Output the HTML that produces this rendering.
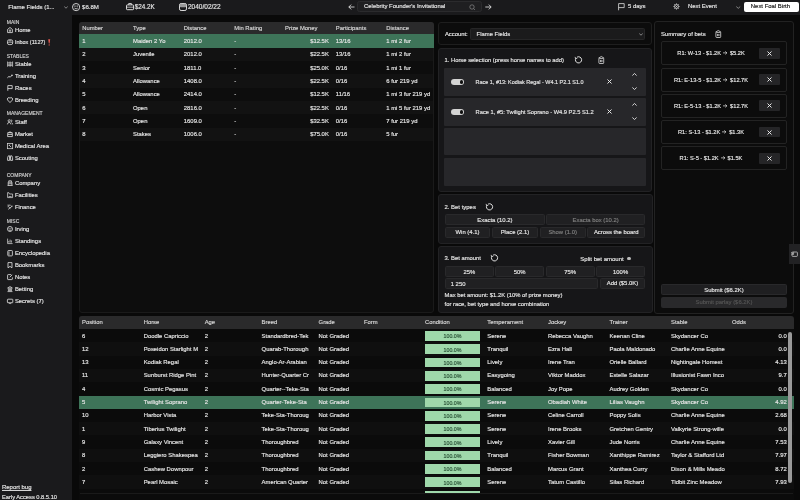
<!DOCTYPE html><html><head><meta charset="utf-8"><style>
*{box-sizing:border-box;margin:0;padding:0}
html,body{width:800px;height:500px;overflow:hidden;background:#090909;font-family:'Liberation Sans', sans-serif;color:#e6e6e6;font-size:5.9px;line-height:1}
.ab{position:absolute}
.t{position:absolute;white-space:nowrap;line-height:1;-webkit-text-stroke-width:0.15px}
.c{transform:translateY(calc(-50% + 0.9px))}
svg{position:absolute;overflow:visible}
</style></head><body><div id="root" style="position:absolute;left:0;top:0;width:800px;height:500px;overflow:hidden;background:#090909;will-change:transform">

<div class="ab" style="left:0px;top:0px;width:800px;height:15px;background:#1a1a1c;"></div>
<div class="ab" style="left:0px;top:15px;width:72px;height:485px;background:#1a1a1c;"></div>
<div class="t c" style="left:8.2px;top:6.0px;font-size:6.0px;">Flame Fields (1...</div>
<svg style="left:64px;top:5.5px" width="4" height="3" viewBox="0 0 4 3"><path d="M0.3 0.6 L2 2.2 L3.7 0.6" fill="none" stroke="#ccc" stroke-width="0.6"/></svg>
<svg style="left:71.9px;top:2.7px" width="8.2" height="8.2" viewBox="0 0 8.2 8.2"><circle cx="4.1" cy="4.1" r="3.6" fill="none" stroke="#e0e0e0" stroke-width="0.9"/><path d="M3 2.4 V3.9 M5.2 2.4 V3.9" stroke="#e0e0e0" stroke-width="0.8"/><path d="M2.5 5.1 Q4.1 6.8 5.7 5.1" fill="none" stroke="#e0e0e0" stroke-width="0.8"/></svg>
<div class="t c" style="left:82px;top:6.0px;font-size:6.1px;">$6.8M</div>
<svg style="left:125.6px;top:2.8px" width="8.1" height="7.2" viewBox="0 0 8.1 7.2"><rect x="0.5" y="1.9" width="7.1" height="4.8" rx="0.8" fill="none" stroke="#e0e0e0" stroke-width="1"/><path d="M2.7 1.9 V0.5 H5.4 V1.9" fill="none" stroke="#e0e0e0" stroke-width="0.9"/><path d="M0.5 4.2 H7.6" stroke="#d0d0d0" stroke-width="0.8"/></svg>
<div class="t c" style="left:134.7px;top:6.0px;font-size:6.3px;">$24.2K</div>
<svg style="left:178.9px;top:2.8px" width="8" height="8" viewBox="0 0 8 8"><rect x="0.5" y="0.5" width="7" height="7" rx="1.6" fill="none" stroke="#dcdcdc" stroke-width="1"/><rect x="0.8" y="0.8" width="6.4" height="3.4" rx="1" fill="#9a9a9a"/></svg>
<div class="t c" style="left:188px;top:6.0px;font-size:6.5px;">2040/02/22</div>
<svg style="left:348px;top:4px" width="7" height="6" viewBox="0 0 7 6"><path d="M6.5 3 H0.8 M3.2 0.6 L0.8 3 L3.2 5.4" fill="none" stroke="#eee" stroke-width="0.8"/></svg>
<div class="ab" style="left:357.3px;top:1px;width:124.69999999999999px;height:11.2px;background:#1f1f21;border:0.6px solid #2b2b2d;border-radius:2.5px;"></div>
<div class="t c" style="left:364px;top:6.3px;font-size:5.94px;">Celebrity Founder's Invitational</div>
<svg style="left:469px;top:4px" width="7" height="7" viewBox="0 0 7 7"><circle cx="3" cy="3" r="2.2" fill="none" stroke="#999" stroke-width="0.6"/><path d="M4.6 4.6 L6 6" stroke="#999" stroke-width="0.6"/></svg>
<svg style="left:485px;top:4px" width="7" height="6" viewBox="0 0 7 6"><path d="M0.3 3 H6 M3.8 0.6 L6.2 3 L3.8 5.4" fill="none" stroke="#eee" stroke-width="0.8"/></svg>
<svg style="left:618.4px;top:2.8px" width="7" height="7.6" viewBox="0 0 7 7.6"><path d="M0.6 7.3 V0.6 H6.2 V4.6 H0.6" fill="none" stroke="#e0e0e0" stroke-width="0.8" stroke-linejoin="round"/></svg>
<div class="t c" style="left:628px;top:6.1px;font-size:5.94px;">5 days</div>
<svg style="left:673px;top:3.4px" width="7" height="7" viewBox="0 0 7 7"><circle cx="3.5" cy="3.5" r="1.9" fill="none" stroke="#ddd" stroke-width="0.9"/><path d="M3.5 0.4 V1.4 M3.5 5.6 V6.6 M0.4 3.5 H1.4 M5.6 3.5 H6.6 M1.3 1.3 L2 2 M5 5 L5.7 5.7 M5.7 1.3 L5 2 M2 5 L1.3 5.7" stroke="#ddd" stroke-width="0.75"/><circle cx="3.5" cy="3.5" r="0.6" fill="#ddd"/></svg>
<div class="t c" style="left:688px;top:6.4px;font-size:5.93px;">Next Event</div>
<svg style="left:736px;top:5.5px" width="4.5" height="3" viewBox="0 0 4.5 3"><path d="M0.3 0.6 L2.25 2.3 L4.2 0.6" fill="none" stroke="#ccc" stroke-width="0.6"/></svg>
<div class="ab" style="left:744px;top:1.5px;width:54.799999999999955px;height:10.1px;background:#ffffff;border-radius:2px;"></div>
<div class="t c" style="left:750.8px;top:5.7px;font-size:5.94px;color:#111;">Next Foal Birth</div>
<div class="t c" style="left:6.75px;top:22px;font-size:5.0px;color:#d0d0d0;">MAIN</div>
<div class="t c" style="left:14.9px;top:30px;font-size:5.9px;">Home</div>
<svg style="left:6.8px;top:26.9px" width="6.2" height="6.2" viewBox="0 0 6.2 6.2"><path d="M0.6 2.4 L3 0.5 L5.4 2.4 V5.6 H0.6 Z" fill="none" stroke="#e6e6e6" stroke-width="0.81" stroke-linejoin="round"/><rect x="2.2" y="3" width="1.6" height="1.2" fill="none" stroke="#e6e6e6" stroke-width="0.54"/></svg>
<div class="t c" style="left:14.9px;top:42px;font-size:5.5px;">Inbox (1127)</div>
<svg style="left:6.8px;top:38.9px" width="6.2" height="6.2" viewBox="0 0 6.2 6.2"><rect x="0.5" y="0.8" width="5.2" height="4.8" rx="1.6" fill="none" stroke="#e6e6e6" stroke-width="0.81"/><path d="M0.5 3.2 H5.7 M2 1.8 H4.2" stroke="#e6e6e6" stroke-width="0.68"/></svg>
<div class="t c" style="left:6.75px;top:55.5px;font-size:5.0px;color:#d0d0d0;">STABLES</div>
<div class="t c" style="left:14.9px;top:63.9px;font-size:5.9px;">Stable</div>
<svg style="left:6.8px;top:60.8px" width="6.2" height="6.2" viewBox="0 0 6.2 6.2"><path d="M0.6 0.5 V5.8 M5.6 0.5 V5.8 M3.1 0.5 V5.8 M0.6 1.8 H5.6 M0.6 3.2 H5.6 M0.6 4.6 H5.6" stroke="#dadada" stroke-width="0.68"/></svg>
<div class="t c" style="left:14.9px;top:75.9px;font-size:5.9px;">Training</div>
<svg style="left:6.8px;top:72.80000000000001px" width="6.2" height="6.2" viewBox="0 0 6.2 6.2"><path d="M0.4 4.8 L2 3.4 L3.2 4.2 L5.4 2" fill="none" stroke="#e6e6e6" stroke-width="0.81"/><circle cx="5" cy="2.2" r="0.7" fill="#e6e6e6"/></svg>
<div class="t c" style="left:14.9px;top:88px;font-size:5.9px;">Races</div>
<svg style="left:6.8px;top:84.9px" width="6.2" height="6.2" viewBox="0 0 6.2 6.2"><path d="M0.8 5.8 V0.6 H5.2 V3.6 H0.8" fill="none" stroke="#e6e6e6" stroke-width="0.81" stroke-linejoin="round"/></svg>
<div class="t c" style="left:14.9px;top:100px;font-size:5.9px;">Breeding</div>
<svg style="left:6.8px;top:96.9px" width="6.2" height="6.2" viewBox="0 0 6.2 6.2"><path d="M3 5.6 L0.7 3.1 A1.3 1.3 0 0 1 3 1.2 A1.3 1.3 0 0 1 5.3 3.1 Z" fill="none" stroke="#e6e6e6" stroke-width="0.81" stroke-linejoin="round"/></svg>
<div class="t c" style="left:6.75px;top:113.25px;font-size:5.0px;color:#d0d0d0;">MANAGEMENT</div>
<div class="t c" style="left:14.9px;top:121.6px;font-size:5.9px;">Staff</div>
<svg style="left:6.8px;top:118.5px" width="6.2" height="6.2" viewBox="0 0 6.2 6.2"><circle cx="2.2" cy="1.8" r="1.1" fill="none" stroke="#e6e6e6" stroke-width="0.74"/><path d="M0.4 5.4 Q0.6 3.4 2.2 3.4 Q3.8 3.4 4 5.4 M3.8 0.8 A1 1 0 0 1 4 2.8 M4.6 3.6 Q5.6 4 5.6 5.4" fill="none" stroke="#e6e6e6" stroke-width="0.74"/></svg>
<div class="t c" style="left:14.9px;top:133.7px;font-size:5.9px;">Market</div>
<svg style="left:6.8px;top:130.6px" width="6.2" height="6.2" viewBox="0 0 6.2 6.2"><path d="M0.8 1.6 H5.2 L5.4 5.6 H0.6 Z M1.8 1.6 Q3 0 4.2 1.6 M0.8 3.4 H5.2" fill="none" stroke="#e6e6e6" stroke-width="0.81" stroke-linejoin="round"/></svg>
<div class="t c" style="left:14.9px;top:145.7px;font-size:5.9px;">Medical Area</div>
<svg style="left:6.8px;top:142.6px" width="6.2" height="6.2" viewBox="0 0 6.2 6.2"><rect x="0.5" y="0.5" width="5.2" height="5.2" fill="none" stroke="#dadada" stroke-width="0.74"/><path d="M2 2 L4.2 4.2 M2.8 1.6 L2 2.4" stroke="#e6e6e6" stroke-width="0.81"/></svg>
<div class="t c" style="left:14.9px;top:158px;font-size:5.9px;">Scouting</div>
<svg style="left:6.8px;top:154.9px" width="6.2" height="6.2" viewBox="0 0 6.2 6.2"><path d="M0.6 5.4 V2.6 L1.4 0.8 H2.6 V5.4 Z M5.6 5.4 V2.6 L4.8 0.8 H3.6 V5.4 Z M2.6 2.6 H3.6" fill="none" stroke="#e6e6e6" stroke-width="0.81" stroke-linejoin="round"/></svg>
<div class="t c" style="left:6.75px;top:174.5px;font-size:5.0px;color:#d0d0d0;">COMPANY</div>
<div class="t c" style="left:14.9px;top:183px;font-size:5.9px;">Company</div>
<svg style="left:6.8px;top:179.9px" width="6.2" height="6.2" viewBox="0 0 6.2 6.2"><path d="M0.6 5.5 H5.6 M1.2 5.5 V2.2 H5 V5.5 M1.8 2.2 V0.8 H4.4 V2.2 M1.2 3.8 H5" fill="none" stroke="#dadada" stroke-width="0.81"/></svg>
<div class="t c" style="left:14.9px;top:195px;font-size:5.9px;">Facilities</div>
<svg style="left:6.8px;top:191.9px" width="6.2" height="6.2" viewBox="0 0 6.2 6.2"><path d="M0.6 0.6 V5.6 H5.6 V2 H2.4 L1.8 0.6 Z M1.6 4.6 H4.6" fill="none" stroke="#dadada" stroke-width="0.74" stroke-linejoin="round"/></svg>
<div class="t c" style="left:14.9px;top:207px;font-size:5.9px;">Finance</div>
<svg style="left:6.8px;top:203.9px" width="6.2" height="6.2" viewBox="0 0 6.2 6.2"><path d="M0.6 2.8 L3.2 0.6 M1.2 5.4 L5.4 2 M1.4 2.6 L3.4 4.6 M3.6 1.2 L5.4 3" fill="none" stroke="#dadada" stroke-width="0.81"/><circle cx="1.1" cy="1.1" r="0.6" fill="#dadada"/></svg>
<div class="t c" style="left:6.75px;top:220.5px;font-size:5.0px;color:#d0d0d0;">MISC</div>
<div class="t c" style="left:14.9px;top:228.9px;font-size:5.9px;">Irving</div>
<svg style="left:6.8px;top:225.8px" width="6.2" height="6.2" viewBox="0 0 6.2 6.2"><circle cx="3" cy="3" r="2.5" fill="none" stroke="#e6e6e6" stroke-width="0.81"/><path d="M2.1 2 V3.3 M3.9 2 V3.3 M2 4.3 H4" stroke="#e6e6e6" stroke-width="0.68"/></svg>
<div class="t c" style="left:14.9px;top:240.9px;font-size:5.9px;">Standings</div>
<svg style="left:6.8px;top:237.8px" width="6.2" height="6.2" viewBox="0 0 6.2 6.2"><path d="M0.6 0.6 V5.6 H5.6 M1.8 4.6 V3 M3.1 4.6 V1.6 M4.4 4.6 V2.4" fill="none" stroke="#dadada" stroke-width="0.74"/></svg>
<div class="t c" style="left:14.9px;top:253px;font-size:5.9px;">Encyclopedia</div>
<svg style="left:6.8px;top:249.9px" width="6.2" height="6.2" viewBox="0 0 6.2 6.2"><rect x="0.8" y="0.5" width="4.6" height="5.4" rx="0.8" fill="none" stroke="#e6e6e6" stroke-width="0.81"/><path d="M2 1.4 V5" stroke="#e6e6e6" stroke-width="0.68"/></svg>
<div class="t c" style="left:14.9px;top:265px;font-size:5.9px;">Bookmarks</div>
<svg style="left:6.8px;top:261.9px" width="6.2" height="6.2" viewBox="0 0 6.2 6.2"><path d="M1 5.8 V0.6 H5 V5.8 L3 4.4 Z" fill="none" stroke="#e6e6e6" stroke-width="0.81" stroke-linejoin="round"/></svg>
<div class="t c" style="left:14.9px;top:277px;font-size:5.9px;">Notes</div>
<svg style="left:6.8px;top:273.9px" width="6.2" height="6.2" viewBox="0 0 6.2 6.2"><path d="M4.2 0.6 H1.2 Q0.6 0.6 0.6 1.2 V5 Q0.6 5.6 1.2 5.6 H4.8 Q5.4 5.6 5.4 5 V3.4 M2.8 3.2 L5.2 0.8" fill="none" stroke="#e6e6e6" stroke-width="0.81"/></svg>
<div class="t c" style="left:14.9px;top:289.2px;font-size:5.9px;">Betting</div>
<svg style="left:6.8px;top:286.09999999999997px" width="6.2" height="6.2" viewBox="0 0 6.2 6.2"><path d="M0.5 5.6 H5.5 M1 4.8 H5 M1.4 2.4 V4.6 M2.4 2.4 V4.6 M3.6 2.4 V4.6 M4.6 2.4 V4.6 M0.6 2 L3 0.5 L5.4 2 Z" fill="none" stroke="#dadada" stroke-width="0.74"/></svg>
<div class="t c" style="left:14.9px;top:301.2px;font-size:5.9px;">Secrets (7)</div>
<svg style="left:6.8px;top:298.09999999999997px" width="6.2" height="6.2" viewBox="0 0 6.2 6.2"><rect x="0.4" y="1.2" width="5.4" height="3.6" rx="0.6" fill="none" stroke="#e6e6e6" stroke-width="0.81"/><path d="M1.8 4.8 L3.1 5.8 L4.4 4.8" fill="none" stroke="#e6e6e6" stroke-width="0.68"/></svg>
<svg style="left:48.4px;top:39px" width="2.4" height="7" viewBox="0 0 2.4 7"><path d="M0.2 0.3 H2.2 L1.6 4.6 H0.8 Z" fill="#e0584f"/><circle cx="1.2" cy="5.9" r="0.65" fill="#e0584f"/></svg>
<div class="t c" style="left:2px;top:487.2px;font-size:5.96px;"><span style="text-decoration:underline">Report bug</span></div>
<div class="t c" style="left:2px;top:496.5px;font-size:5.72px;">Early Access 0.8.5.10</div>
<div class="ab" style="left:79px;top:21.6px;width:354.5px;height:291.4px;background:#0d0d0d;border:0.6px solid #1a1a1a;border-radius:3px;"></div>
<div class="ab" style="left:79px;top:21.6px;width:354.5px;height:12.799999999999997px;background:#2a2a2b;border-radius:3px 3px 0 0;"></div>
<div class="t c" style="left:82.2px;top:28.2px;font-size:5.85px;color:#d8d8d8;">Number</div>
<div class="t c" style="left:133px;top:28.2px;font-size:5.85px;color:#d8d8d8;">Type</div>
<div class="t c" style="left:183.8px;top:28.2px;font-size:5.85px;color:#d8d8d8;">Distance</div>
<div class="t c" style="left:234.3px;top:28.2px;font-size:5.85px;color:#d8d8d8;">Min Rating</div>
<div class="t c" style="left:285px;top:28.2px;font-size:5.85px;color:#d8d8d8;">Prize Money</div>
<div class="t c" style="left:335.8px;top:28.2px;font-size:5.85px;color:#d8d8d8;">Participants</div>
<div class="t c" style="left:386.3px;top:28.2px;font-size:5.85px;color:#d8d8d8;">Distance</div>
<div class="ab" style="left:79px;top:34.4px;width:354.5px;height:13.300000000000004px;background:#3e7459;"></div>
<div class="t c" style="left:82.2px;top:41.05px;font-size:5.9px;">1</div>
<div class="t c" style="left:133px;top:41.05px;font-size:5.9px;">Maiden 2 Yo</div>
<div class="t c" style="left:183.8px;top:41.05px;font-size:5.9px;">2012.0</div>
<div class="t c" style="left:234.3px;top:41.05px;font-size:5.9px;">-</div>
<div class="t c" style="right:471.2px;top:41.05px;font-size:5.9px">$12.5K</div>
<div class="t c" style="left:335.8px;top:41.05px;font-size:5.9px;">13/16</div>
<div class="t c" style="left:386.3px;top:41.05px;font-size:5.9px;">1 mi 2 fur</div>
<div class="ab" style="left:80px;top:47.7px;width:352.5px;height:13.299999999999997px;background:#121212;"></div>
<div class="t c" style="left:82.2px;top:54.35px;font-size:5.9px;">2</div>
<div class="t c" style="left:133px;top:54.35px;font-size:5.9px;">Juvenile</div>
<div class="t c" style="left:183.8px;top:54.35px;font-size:5.9px;">2012.0</div>
<div class="t c" style="left:234.3px;top:54.35px;font-size:5.9px;">-</div>
<div class="t c" style="right:471.2px;top:54.35px;font-size:5.9px">$22.5K</div>
<div class="t c" style="left:335.8px;top:54.35px;font-size:5.9px;">13/16</div>
<div class="t c" style="left:386.3px;top:54.35px;font-size:5.9px;">1 mi 2 fur</div>
<div class="t c" style="left:82.2px;top:67.65px;font-size:5.9px;">3</div>
<div class="t c" style="left:133px;top:67.65px;font-size:5.9px;">Senior</div>
<div class="t c" style="left:183.8px;top:67.65px;font-size:5.9px;">1811.0</div>
<div class="t c" style="left:234.3px;top:67.65px;font-size:5.9px;">-</div>
<div class="t c" style="right:471.2px;top:67.65px;font-size:5.9px">$25.0K</div>
<div class="t c" style="left:335.8px;top:67.65px;font-size:5.9px;">0/16</div>
<div class="t c" style="left:386.3px;top:67.65px;font-size:5.9px;">1 mi 1 fur</div>
<div class="ab" style="left:80px;top:74.30000000000001px;width:352.5px;height:13.299999999999997px;background:#121212;"></div>
<div class="t c" style="left:82.2px;top:80.95000000000002px;font-size:5.9px;">4</div>
<div class="t c" style="left:133px;top:80.95000000000002px;font-size:5.9px;">Allowance</div>
<div class="t c" style="left:183.8px;top:80.95000000000002px;font-size:5.9px;">1408.0</div>
<div class="t c" style="left:234.3px;top:80.95000000000002px;font-size:5.9px;">-</div>
<div class="t c" style="right:471.2px;top:80.95000000000002px;font-size:5.9px">$22.5K</div>
<div class="t c" style="left:335.8px;top:80.95000000000002px;font-size:5.9px;">0/16</div>
<div class="t c" style="left:386.3px;top:80.95000000000002px;font-size:5.9px;">6 fur 219 yd</div>
<div class="t c" style="left:82.2px;top:94.25px;font-size:5.9px;">5</div>
<div class="t c" style="left:133px;top:94.25px;font-size:5.9px;">Allowance</div>
<div class="t c" style="left:183.8px;top:94.25px;font-size:5.9px;">2414.0</div>
<div class="t c" style="left:234.3px;top:94.25px;font-size:5.9px;">-</div>
<div class="t c" style="right:471.2px;top:94.25px;font-size:5.9px">$12.5K</div>
<div class="t c" style="left:335.8px;top:94.25px;font-size:5.9px;">11/16</div>
<div class="t c" style="left:386.3px;top:94.25px;font-size:5.9px;">1 mi 3 fur 219 yd</div>
<div class="ab" style="left:80px;top:100.9px;width:352.5px;height:13.299999999999997px;background:#121212;"></div>
<div class="t c" style="left:82.2px;top:107.55000000000001px;font-size:5.9px;">6</div>
<div class="t c" style="left:133px;top:107.55000000000001px;font-size:5.9px;">Open</div>
<div class="t c" style="left:183.8px;top:107.55000000000001px;font-size:5.9px;">2816.0</div>
<div class="t c" style="left:234.3px;top:107.55000000000001px;font-size:5.9px;">-</div>
<div class="t c" style="right:471.2px;top:107.55000000000001px;font-size:5.9px">$22.5K</div>
<div class="t c" style="left:335.8px;top:107.55000000000001px;font-size:5.9px;">0/16</div>
<div class="t c" style="left:386.3px;top:107.55000000000001px;font-size:5.9px;">1 mi 5 fur 219 yd</div>
<div class="t c" style="left:82.2px;top:120.85000000000002px;font-size:5.9px;">7</div>
<div class="t c" style="left:133px;top:120.85000000000002px;font-size:5.9px;">Open</div>
<div class="t c" style="left:183.8px;top:120.85000000000002px;font-size:5.9px;">1609.0</div>
<div class="t c" style="left:234.3px;top:120.85000000000002px;font-size:5.9px;">-</div>
<div class="t c" style="right:471.2px;top:120.85000000000002px;font-size:5.9px">$32.5K</div>
<div class="t c" style="left:335.8px;top:120.85000000000002px;font-size:5.9px;">0/16</div>
<div class="t c" style="left:386.3px;top:120.85000000000002px;font-size:5.9px;">7 fur 219 yd</div>
<div class="ab" style="left:80px;top:127.5px;width:352.5px;height:13.300000000000011px;background:#121212;"></div>
<div class="t c" style="left:82.2px;top:134.15px;font-size:5.9px;">8</div>
<div class="t c" style="left:133px;top:134.15px;font-size:5.9px;">Stakes</div>
<div class="t c" style="left:183.8px;top:134.15px;font-size:5.9px;">1006.0</div>
<div class="t c" style="left:234.3px;top:134.15px;font-size:5.9px;">-</div>
<div class="t c" style="right:471.2px;top:134.15px;font-size:5.9px">$75.0K</div>
<div class="t c" style="left:335.8px;top:134.15px;font-size:5.9px;">0/16</div>
<div class="t c" style="left:386.3px;top:134.15px;font-size:5.9px;">5 fur</div>
<div class="ab" style="left:438px;top:21.6px;width:214px;height:23.0px;background:#0c0c0c;border:1px solid #1e1e1e;border-radius:3px;"></div>
<div class="t c" style="left:444.9px;top:34px;font-size:5.88px;">Account:</div>
<div class="ab" style="left:470px;top:28.4px;width:175.29999999999995px;height:11.399999999999999px;background:#1b1b1c;border:0.6px solid #262627;border-radius:1.5px;"></div>
<div class="t c" style="left:476.6px;top:34.1px;font-size:5.9px;">Flame Fields</div>
<svg style="left:638.8px;top:32.6px" width="4" height="3" viewBox="0 0 4 3"><path d="M0.3 0.6 L2 2.2 L3.7 0.6" fill="none" stroke="#ccc" stroke-width="0.6"/></svg>
<div class="ab" style="left:438px;top:48.2px;width:214px;height:143.60000000000002px;background:#161618;border:0.8px solid #222224;border-radius:3px;"></div>
<div class="t c" style="left:444.5px;top:60.2px;font-size:5.84px;">1. Horse selection (press horse names to add)</div>
<svg style="left:574.1px;top:56.3px" width="8" height="8" viewBox="0 0 8 8"><path d="M1.9 2.2 A3.1 3.1 0 1 0 3.1 1.1" fill="none" stroke="#e8e8e8" stroke-width="0.95"/><path d="M1.1 0.9 L1.6 2.6 L3.3 2.2" fill="none" stroke="#e8e8e8" stroke-width="0.8"/></svg>
<svg style="left:597.8000000000001px;top:56px" width="6.6" height="8" viewBox="0 0 6.6 8"><path d="M0.4 2.2 L3.3 0.5 L6.2 2.2" fill="none" stroke="#e0e0e0" stroke-width="0.8" stroke-linejoin="round"/><rect x="0.9" y="2.4" width="4.8" height="5.1" rx="0.7" fill="none" stroke="#e0e0e0" stroke-width="0.8"/><rect x="2.5" y="4.2" width="1.6" height="1.6" fill="none" stroke="#e0e0e0" stroke-width="0.55"/></svg>
<div class="ab" style="left:443.5px;top:67.7px;width:202.0px;height:28.099999999999994px;background:#27272a;border-radius:1px;"></div>
<div class="ab" style="left:451.4px;top:78.55px;width:12.900000000000034px;height:6.400000000000006px;background:#d4d4d4;border-radius:3.2px;"></div>
<div class="ab" style="left:459.6px;top:79.95px;width:3.6px;height:3.6px;border-radius:50%;background:#111"></div>
<div class="t c" style="left:475.6px;top:81.75px;font-size:5.46px;">Race 1, #13: Kodiak Regal - W4.1 P2.1 S1.0</div>
<svg style="left:606.8px;top:79.25px" width="5" height="5" viewBox="0 0 5 5"><path d="M0.5 0.5 L4.5 4.5 M4.5 0.5 L0.5 4.5" stroke="#f0f0f0" stroke-width="0.95"/></svg>
<svg style="left:632.4px;top:72.7px" width="5" height="3" viewBox="0 0 5 3"><path d="M0.4 2.5 L2.5 0.5 L4.6 2.5" fill="none" stroke="#e6e6e6" stroke-width="0.9"/></svg>
<svg style="left:632.4px;top:87.30000000000001px" width="5" height="3" viewBox="0 0 5 3"><path d="M0.4 0.5 L2.5 2.5 L4.6 0.5" fill="none" stroke="#e6e6e6" stroke-width="0.9"/></svg>
<div class="ab" style="left:443.5px;top:97.8px;width:202.0px;height:28.0px;background:#27272a;border-radius:1px;"></div>
<div class="ab" style="left:451.4px;top:108.6px;width:12.900000000000034px;height:6.400000000000006px;background:#d4d4d4;border-radius:3.2px;"></div>
<div class="ab" style="left:459.6px;top:110.0px;width:3.6px;height:3.6px;border-radius:50%;background:#111"></div>
<div class="t c" style="left:475.6px;top:111.8px;font-size:5.73px;">Race 1, #5: Twilight Soprano - W4.9 P2.5 S1.2</div>
<svg style="left:606.8px;top:109.3px" width="5" height="5" viewBox="0 0 5 5"><path d="M0.5 0.5 L4.5 4.5 M4.5 0.5 L0.5 4.5" stroke="#f0f0f0" stroke-width="0.95"/></svg>
<svg style="left:632.4px;top:102.8px" width="5" height="3" viewBox="0 0 5 3"><path d="M0.4 2.5 L2.5 0.5 L4.6 2.5" fill="none" stroke="#e6e6e6" stroke-width="0.9"/></svg>
<svg style="left:632.4px;top:117.4px" width="5" height="3" viewBox="0 0 5 3"><path d="M0.4 0.5 L2.5 2.5 L4.6 0.5" fill="none" stroke="#e6e6e6" stroke-width="0.9"/></svg>
<div class="ab" style="left:443.5px;top:127.6px;width:202.0px;height:27.80000000000001px;background:#27272a;border-radius:1px;"></div>
<div class="ab" style="left:443.5px;top:157.5px;width:202.0px;height:28.5px;background:#27272a;border-radius:1px;"></div>
<div class="ab" style="left:438px;top:194.1px;width:214.5px;height:50.20000000000002px;background:#161618;border:0.8px solid #222224;border-radius:3px;"></div>
<div class="t c" style="left:444.5px;top:206.8px;font-size:5.95px;">2. Bet types</div>
<svg style="left:484.5px;top:202.8px" width="8" height="8" viewBox="0 0 8 8"><path d="M1.9 2.2 A3.1 3.1 0 1 0 3.1 1.1" fill="none" stroke="#e8e8e8" stroke-width="0.95"/><path d="M1.1 0.9 L1.6 2.6 L3.3 2.2" fill="none" stroke="#e8e8e8" stroke-width="0.8"/></svg>
<div class="ab" style="left:445.2px;top:214px;width:99.40000000000003px;height:11.199999999999989px;background:#202022;border:0.6px solid #29292b;border-radius:1.5px;"></div>
<div class="t c" style="left:445.2px;width:99.40000000000003px;text-align:center;top:219.6px;font-size:5.9px;color:#e6e6e6">Exacta (10.2)</div>
<div class="ab" style="left:546.1px;top:214px;width:99.19999999999993px;height:11.199999999999989px;background:#202022;border:0.6px solid #29292b;border-radius:1.5px;"></div>
<div class="t c" style="left:546.1px;width:99.19999999999993px;text-align:center;top:219.6px;font-size:5.9px;color:#808080">Exacta box (10.2)</div>
<div class="ab" style="left:445.2px;top:226.9px;width:44.60000000000002px;height:10.699999999999989px;background:#202022;border:0.6px solid #29292b;border-radius:1.5px;"></div>
<div class="t c" style="left:445.2px;width:44.60000000000002px;text-align:center;top:232.25px;font-size:5.9px;color:#e6e6e6">Win (4.1)</div>
<div class="ab" style="left:491.9px;top:226.9px;width:46.10000000000002px;height:10.699999999999989px;background:#202022;border:0.6px solid #29292b;border-radius:1.5px;"></div>
<div class="t c" style="left:491.9px;width:46.10000000000002px;text-align:center;top:232.25px;font-size:5.9px;color:#e6e6e6">Place (2.1)</div>
<div class="ab" style="left:539.6px;top:226.9px;width:46.10000000000002px;height:10.699999999999989px;background:#202022;border:0.6px solid #29292b;border-radius:1.5px;"></div>
<div class="t c" style="left:539.6px;width:46.10000000000002px;text-align:center;top:232.25px;font-size:5.9px;color:#808080">Show (1.0)</div>
<div class="ab" style="left:587.2px;top:226.9px;width:58.0px;height:10.699999999999989px;background:#202022;border:0.6px solid #29292b;border-radius:1.5px;"></div>
<div class="t c" style="left:587.2px;width:58.0px;text-align:center;top:232.25px;font-size:5.9px;color:#e6e6e6">Across the board</div>
<div class="ab" style="left:438px;top:246.1px;width:214.5px;height:66.9px;background:#161618;border:0.8px solid #222224;border-radius:3px;"></div>
<div class="t c" style="left:444.5px;top:258.4px;font-size:5.86px;">3. Bet amount</div>
<svg style="left:489.7px;top:254.39999999999998px" width="8" height="8" viewBox="0 0 8 8"><path d="M1.9 2.2 A3.1 3.1 0 1 0 3.1 1.1" fill="none" stroke="#e8e8e8" stroke-width="0.95"/><path d="M1.1 0.9 L1.6 2.6 L3.3 2.2" fill="none" stroke="#e8e8e8" stroke-width="0.8"/></svg>
<div class="t c" style="left:580.3px;top:258.4px;font-size:6.0px;">Split bet amount</div>
<div class="ab" style="left:627.2px;top:256.6px;width:3.6px;height:3.6px;border-radius:50%;background:#bbb"></div>
<div class="ab" style="left:445.1px;top:265.9px;width:48.69999999999999px;height:11.200000000000045px;background:#202022;border:0.6px solid #29292b;border-radius:1.5px;"></div>
<div class="t c" style="left:445.1px;width:48.69999999999999px;text-align:center;top:271.5px;font-size:5.9px;color:#e6e6e6">25%</div>
<div class="ab" style="left:494.9px;top:265.9px;width:49.60000000000002px;height:11.200000000000045px;background:#202022;border:0.6px solid #29292b;border-radius:1.5px;"></div>
<div class="t c" style="left:494.9px;width:49.60000000000002px;text-align:center;top:271.5px;font-size:5.9px;color:#e6e6e6">50%</div>
<div class="ab" style="left:545.8px;top:265.9px;width:48.80000000000007px;height:11.200000000000045px;background:#202022;border:0.6px solid #29292b;border-radius:1.5px;"></div>
<div class="t c" style="left:545.8px;width:48.80000000000007px;text-align:center;top:271.5px;font-size:5.9px;color:#e6e6e6">75%</div>
<div class="ab" style="left:595.8px;top:265.9px;width:49.60000000000002px;height:11.200000000000045px;background:#202022;border:0.6px solid #29292b;border-radius:1.5px;"></div>
<div class="t c" style="left:595.8px;width:49.60000000000002px;text-align:center;top:271.5px;font-size:5.9px;color:#e6e6e6">100%</div>
<div class="ab" style="left:445.1px;top:277.8px;width:153.39999999999998px;height:11.199999999999989px;background:#202022;border:0.6px solid #29292b;border-radius:1.5px;"></div>
<div class="t c" style="left:450.7px;top:283.7px;font-size:5.9px;">1 250</div>
<div class="ab" style="left:599.6px;top:277.8px;width:45.799999999999955px;height:11.199999999999989px;background:#202022;border:0.6px solid #29292b;border-radius:1.5px;"></div>
<div class="t c" style="left:599.6px;width:45.799999999999955px;text-align:center;top:283.4px;font-size:5.9px;color:#e6e6e6">Add ($5.0K)</div>
<div class="t c" style="left:444.5px;top:294.7px;font-size:5.86px;">Max bet amount: $1.2K (10% of prize money)</div>
<div class="t c" style="left:444.5px;top:304px;font-size:5.86px;">for race, bet type and horse combination</div>
<div class="ab" style="left:654px;top:21.4px;width:139.5px;height:292.6px;background:#0c0c0c;border:1px solid #222;border-radius:3px;"></div>
<div class="t c" style="left:660.9px;top:33.6px;font-size:5.93px;">Summary of bets</div>
<svg style="left:715.2px;top:30.200000000000003px" width="6.6" height="8" viewBox="0 0 6.6 8"><path d="M0.4 2.2 L3.3 0.5 L6.2 2.2" fill="none" stroke="#e0e0e0" stroke-width="0.8" stroke-linejoin="round"/><rect x="0.9" y="2.4" width="4.8" height="5.1" rx="0.7" fill="none" stroke="#e0e0e0" stroke-width="0.8"/><rect x="2.5" y="4.2" width="1.6" height="1.6" fill="none" stroke="#e0e0e0" stroke-width="0.55"/></svg>
<div class="ab" style="left:661.2px;top:41.3px;width:125.59999999999991px;height:24.0px;background:#0c0c0c;border:1px solid #232323;border-radius:2px;"></div>
<div class="t c" style="left:661px;width:100px;text-align:center;top:53.3px;font-size:5.67px">R1: W-13 - $1.2K<svg style="position:static;display:inline-block;vertical-align:0.3px;margin:0 2.3px" width="4.4" height="3.6" viewBox="0 0 4.4 3.6"><path d="M0 1.8 H3.9 M2.3 0.3 L3.9 1.8 L2.3 3.3" fill="none" stroke="#e6e6e6" stroke-width="0.7"/></svg>$5.2K</div>
<div class="ab" style="left:759.2px;top:47.9px;width:20.799999999999955px;height:10.799999999999997px;background:#252527;border-radius:1px;"></div>
<svg style="left:767.1px;top:50.8px" width="5" height="5" viewBox="0 0 5 5"><path d="M0.5 0.5 L4.5 4.5 M4.5 0.5 L0.5 4.5" stroke="#f0f0f0" stroke-width="0.95"/></svg>
<div class="ab" style="left:661.2px;top:67.55px;width:125.59999999999991px;height:24.0px;background:#0c0c0c;border:1px solid #232323;border-radius:2px;"></div>
<div class="t c" style="left:661px;width:100px;text-align:center;top:79.55px;font-size:5.67px">R1: E-13-5 - $1.2K<svg style="position:static;display:inline-block;vertical-align:0.3px;margin:0 2.3px" width="4.4" height="3.6" viewBox="0 0 4.4 3.6"><path d="M0 1.8 H3.9 M2.3 0.3 L3.9 1.8 L2.3 3.3" fill="none" stroke="#e6e6e6" stroke-width="0.7"/></svg>$12.7K</div>
<div class="ab" style="left:759.2px;top:74.14999999999999px;width:20.799999999999955px;height:10.800000000000011px;background:#252527;border-radius:1px;"></div>
<svg style="left:767.1px;top:77.05px" width="5" height="5" viewBox="0 0 5 5"><path d="M0.5 0.5 L4.5 4.5 M4.5 0.5 L0.5 4.5" stroke="#f0f0f0" stroke-width="0.95"/></svg>
<div class="ab" style="left:661.2px;top:93.8px;width:125.59999999999991px;height:24.0px;background:#0c0c0c;border:1px solid #232323;border-radius:2px;"></div>
<div class="t c" style="left:661px;width:100px;text-align:center;top:105.8px;font-size:5.67px">R1: E-5-13 - $1.2K<svg style="position:static;display:inline-block;vertical-align:0.3px;margin:0 2.3px" width="4.4" height="3.6" viewBox="0 0 4.4 3.6"><path d="M0 1.8 H3.9 M2.3 0.3 L3.9 1.8 L2.3 3.3" fill="none" stroke="#e6e6e6" stroke-width="0.7"/></svg>$12.7K</div>
<div class="ab" style="left:759.2px;top:100.39999999999999px;width:20.799999999999955px;height:10.800000000000011px;background:#252527;border-radius:1px;"></div>
<svg style="left:767.1px;top:103.3px" width="5" height="5" viewBox="0 0 5 5"><path d="M0.5 0.5 L4.5 4.5 M4.5 0.5 L0.5 4.5" stroke="#f0f0f0" stroke-width="0.95"/></svg>
<div class="ab" style="left:661.2px;top:120.05px;width:125.59999999999991px;height:24.000000000000014px;background:#0c0c0c;border:1px solid #232323;border-radius:2px;"></div>
<div class="t c" style="left:661px;width:100px;text-align:center;top:132.05px;font-size:5.67px">R1: S-13 - $1.2K<svg style="position:static;display:inline-block;vertical-align:0.3px;margin:0 2.3px" width="4.4" height="3.6" viewBox="0 0 4.4 3.6"><path d="M0 1.8 H3.9 M2.3 0.3 L3.9 1.8 L2.3 3.3" fill="none" stroke="#e6e6e6" stroke-width="0.7"/></svg>$1.3K</div>
<div class="ab" style="left:759.2px;top:126.65px;width:20.799999999999955px;height:10.800000000000011px;background:#252527;border-radius:1px;"></div>
<svg style="left:767.1px;top:129.55px" width="5" height="5" viewBox="0 0 5 5"><path d="M0.5 0.5 L4.5 4.5 M4.5 0.5 L0.5 4.5" stroke="#f0f0f0" stroke-width="0.95"/></svg>
<div class="ab" style="left:661.2px;top:146.3px;width:125.59999999999991px;height:24.0px;background:#0c0c0c;border:1px solid #232323;border-radius:2px;"></div>
<div class="t c" style="left:661px;width:100px;text-align:center;top:158.3px;font-size:5.67px">R1: S-5 - $1.2K<svg style="position:static;display:inline-block;vertical-align:0.3px;margin:0 2.3px" width="4.4" height="3.6" viewBox="0 0 4.4 3.6"><path d="M0 1.8 H3.9 M2.3 0.3 L3.9 1.8 L2.3 3.3" fill="none" stroke="#e6e6e6" stroke-width="0.7"/></svg>$1.5K</div>
<div class="ab" style="left:759.2px;top:152.9px;width:20.799999999999955px;height:10.800000000000011px;background:#252527;border-radius:1px;"></div>
<svg style="left:767.1px;top:155.8px" width="5" height="5" viewBox="0 0 5 5"><path d="M0.5 0.5 L4.5 4.5 M4.5 0.5 L0.5 4.5" stroke="#f0f0f0" stroke-width="0.95"/></svg>
<div class="ab" style="left:661.3px;top:284px;width:125.40000000000009px;height:11.100000000000023px;background:#1f1f21;border:0.6px solid #29292b;border-radius:1.5px;"></div>
<div class="t c" style="left:661.3px;width:125.40000000000009px;text-align:center;top:289.55px;font-size:5.9px;color:#e6e6e6">Submit ($6.2K)</div>
<div class="ab" style="left:661.3px;top:296.8px;width:125.40000000000009px;height:10.800000000000011px;background:#29292b;border:0.6px solid #29292b;border-radius:1.5px;"></div>
<div class="t c" style="left:661.3px;width:125.40000000000009px;text-align:center;top:302.20000000000005px;font-size:5.9px;color:#555">Submit parlay ($6.2K)</div>
<div class="ab" style="left:788.5px;top:244px;width:11.5px;height:20px;background:#222224;"></div>
<svg style="left:790.5px;top:250.5px" width="7" height="6" viewBox="0 0 7 6"><rect x="1" y="1" width="5.4" height="4.4" rx="0.8" fill="none" stroke="#ddd" stroke-width="0.7"/><path d="M0.3 1.3 L2.6 3.2 M0.5 3.3 H2.6 V1.2" fill="none" stroke="#ddd" stroke-width="0.6"/></svg>
<div class="ab" style="left:79px;top:315.8px;width:714.5px;height:184.2px;background:#0b0b0b;"></div>
<div class="ab" style="left:79px;top:315.8px;width:714.5px;height:13.199999999999989px;background:#2a2a2b;border-radius:3px 3px 0 0;"></div>
<div class="t c" style="left:82px;top:322.0px;font-size:5.85px;color:#d8d8d8;">Position</div>
<div class="t c" style="left:143.7px;top:322.0px;font-size:5.85px;color:#d8d8d8;">Horse</div>
<div class="t c" style="left:204.7px;top:322.0px;font-size:5.85px;color:#d8d8d8;">Age</div>
<div class="t c" style="left:261.6px;top:322.0px;font-size:5.85px;color:#d8d8d8;">Breed</div>
<div class="t c" style="left:318.6px;top:322.0px;font-size:5.85px;color:#d8d8d8;">Grade</div>
<div class="t c" style="left:364px;top:322.0px;font-size:5.85px;color:#d8d8d8;">Form</div>
<div class="t c" style="left:425px;top:322.0px;font-size:5.85px;color:#d8d8d8;">Condition</div>
<div class="t c" style="left:487.3px;top:322.0px;font-size:5.85px;color:#d8d8d8;">Temperament</div>
<div class="t c" style="left:548px;top:322.0px;font-size:5.85px;color:#d8d8d8;">Jockey</div>
<div class="t c" style="left:609.5px;top:322.0px;font-size:5.85px;color:#d8d8d8;">Trainer</div>
<div class="t c" style="left:671px;top:322.0px;font-size:5.85px;color:#d8d8d8;">Stable</div>
<div class="t c" style="left:732px;top:322.0px;font-size:5.85px;color:#d8d8d8;">Odds</div>
<div class="ab" style="left:79px;top:329px;width:714.5px;height:164px;overflow:hidden">
<div class="t c" style="left:3px;top:6.5px;font-size:5.9px;">6</div>
<div class="t c" style="left:64.69999999999999px;top:6.5px;font-size:5.9px;">Doodle Capriccio</div>
<div class="t c" style="left:125.69999999999999px;top:6.5px;font-size:5.9px;">2</div>
<div class="t c" style="left:182.60000000000002px;top:6.5px;font-size:5.9px;">Standardbred-Tek</div>
<div class="t c" style="left:239.60000000000002px;top:6.5px;font-size:5.9px;">Not Graded</div>
<div class="ab" style="left:346px;top:2.0px;width:55px;height:9.8px;background:#9fd8ab;"></div>
<div class="t c" style="left:346px;width:55px;text-align:center;top:7.2px;font-size:5.3px;color:#274f34">100.0%</div>
<div class="t c" style="left:408.3px;top:6.5px;font-size:5.9px;">Serene</div>
<div class="t c" style="left:469px;top:6.5px;font-size:5.9px;">Rebecca Vaughn</div>
<div class="t c" style="left:530.5px;top:6.5px;font-size:5.9px;">Keenan Cline</div>
<div class="t c" style="left:592px;top:6.5px;font-size:5.9px;">Skydancer Co</div>
<div class="t c" style="right:6.7999999999999545px;top:6.5px;font-size:5.9px">0.0</div>
<div class="ab" style="left:0px;top:13.3px;width:714.5px;height:13.3px;background:#0f0f0f;"></div>
<div class="t c" style="left:3px;top:19.8px;font-size:5.9px;">12</div>
<div class="t c" style="left:64.69999999999999px;top:19.8px;font-size:5.9px;">Poseidon Starlight M</div>
<div class="t c" style="left:125.69999999999999px;top:19.8px;font-size:5.9px;">2</div>
<div class="t c" style="left:182.60000000000002px;top:19.8px;font-size:5.9px;">Quarab-Thorough</div>
<div class="t c" style="left:239.60000000000002px;top:19.8px;font-size:5.9px;">Not Graded</div>
<div class="ab" style="left:346px;top:15.3px;width:55px;height:9.8px;background:#9fd8ab;"></div>
<div class="t c" style="left:346px;width:55px;text-align:center;top:20.5px;font-size:5.3px;color:#274f34">100.0%</div>
<div class="t c" style="left:408.3px;top:19.8px;font-size:5.9px;">Tranquil</div>
<div class="t c" style="left:469px;top:19.8px;font-size:5.9px;">Ezra Hall</div>
<div class="t c" style="left:530.5px;top:19.8px;font-size:5.9px;">Paola Maldonado</div>
<div class="t c" style="left:592px;top:19.8px;font-size:5.9px;">Charlie Anne Equine</div>
<div class="t c" style="right:6.7999999999999545px;top:19.8px;font-size:5.9px">0.0</div>
<div class="t c" style="left:3px;top:33.1px;font-size:5.9px;">13</div>
<div class="t c" style="left:64.69999999999999px;top:33.1px;font-size:5.9px;">Kodiak Regal</div>
<div class="t c" style="left:125.69999999999999px;top:33.1px;font-size:5.9px;">2</div>
<div class="t c" style="left:182.60000000000002px;top:33.1px;font-size:5.9px;">Anglo-Ar-Arabian</div>
<div class="t c" style="left:239.60000000000002px;top:33.1px;font-size:5.9px;">Not Graded</div>
<div class="ab" style="left:346px;top:28.6px;width:55px;height:9.800000000000004px;background:#9fd8ab;"></div>
<div class="t c" style="left:346px;width:55px;text-align:center;top:33.800000000000004px;font-size:5.3px;color:#274f34">100.0%</div>
<div class="t c" style="left:408.3px;top:33.1px;font-size:5.9px;">Lively</div>
<div class="t c" style="left:469px;top:33.1px;font-size:5.9px;">Irene Tran</div>
<div class="t c" style="left:530.5px;top:33.1px;font-size:5.9px;">Orielle Ballard</div>
<div class="t c" style="left:592px;top:33.1px;font-size:5.9px;">Nightingale Homest</div>
<div class="t c" style="right:6.7999999999999545px;top:33.1px;font-size:5.9px">4.13</div>
<div class="ab" style="left:0px;top:39.900000000000006px;width:714.5px;height:13.299999999999997px;background:#0f0f0f;"></div>
<div class="t c" style="left:3px;top:46.400000000000006px;font-size:5.9px;">11</div>
<div class="t c" style="left:64.69999999999999px;top:46.400000000000006px;font-size:5.9px;">Sunburst Ridge Pint</div>
<div class="t c" style="left:125.69999999999999px;top:46.400000000000006px;font-size:5.9px;">2</div>
<div class="t c" style="left:182.60000000000002px;top:46.400000000000006px;font-size:5.9px;">Hunter-Quarter Cr</div>
<div class="t c" style="left:239.60000000000002px;top:46.400000000000006px;font-size:5.9px;">Not Graded</div>
<div class="ab" style="left:346px;top:41.900000000000006px;width:55px;height:9.799999999999997px;background:#9fd8ab;"></div>
<div class="t c" style="left:346px;width:55px;text-align:center;top:47.10000000000001px;font-size:5.3px;color:#274f34">100.0%</div>
<div class="t c" style="left:408.3px;top:46.400000000000006px;font-size:5.9px;">Easygoing</div>
<div class="t c" style="left:469px;top:46.400000000000006px;font-size:5.9px;">Viktor Maddox</div>
<div class="t c" style="left:530.5px;top:46.400000000000006px;font-size:5.9px;">Estelle Salazar</div>
<div class="t c" style="left:592px;top:46.400000000000006px;font-size:5.9px;">Illusionist Fawn Inco</div>
<div class="t c" style="right:6.7999999999999545px;top:46.400000000000006px;font-size:5.9px">9.7</div>
<div class="t c" style="left:3px;top:59.7px;font-size:5.9px;">4</div>
<div class="t c" style="left:64.69999999999999px;top:59.7px;font-size:5.9px;">Cosmic Pegasus</div>
<div class="t c" style="left:125.69999999999999px;top:59.7px;font-size:5.9px;">2</div>
<div class="t c" style="left:182.60000000000002px;top:59.7px;font-size:5.9px;">Quarter--Teke-Sta</div>
<div class="t c" style="left:239.60000000000002px;top:59.7px;font-size:5.9px;">Not Graded</div>
<div class="ab" style="left:346px;top:55.2px;width:55px;height:9.799999999999997px;background:#9fd8ab;"></div>
<div class="t c" style="left:346px;width:55px;text-align:center;top:60.400000000000006px;font-size:5.3px;color:#274f34">100.0%</div>
<div class="t c" style="left:408.3px;top:59.7px;font-size:5.9px;">Balanced</div>
<div class="t c" style="left:469px;top:59.7px;font-size:5.9px;">Joy Pope</div>
<div class="t c" style="left:530.5px;top:59.7px;font-size:5.9px;">Audrey Golden</div>
<div class="t c" style="left:592px;top:59.7px;font-size:5.9px;">Skydancer Co</div>
<div class="t c" style="right:6.7999999999999545px;top:59.7px;font-size:5.9px">0.0</div>
<div class="ab" style="left:0px;top:66.5px;width:714.5px;height:13.299999999999997px;background:#3e7459;"></div>
<div class="t c" style="left:3px;top:73.0px;font-size:5.9px;">5</div>
<div class="t c" style="left:64.69999999999999px;top:73.0px;font-size:5.9px;">Twilight Soprano</div>
<div class="t c" style="left:125.69999999999999px;top:73.0px;font-size:5.9px;">2</div>
<div class="t c" style="left:182.60000000000002px;top:73.0px;font-size:5.9px;">Quarter-Teke-Sta</div>
<div class="t c" style="left:239.60000000000002px;top:73.0px;font-size:5.9px;">Not Graded</div>
<div class="ab" style="left:346px;top:68.5px;width:55px;height:9.799999999999997px;background:#9fd8ab;"></div>
<div class="t c" style="left:346px;width:55px;text-align:center;top:73.7px;font-size:5.3px;color:#274f34">100.0%</div>
<div class="t c" style="left:408.3px;top:73.0px;font-size:5.9px;">Serene</div>
<div class="t c" style="left:469px;top:73.0px;font-size:5.9px;">Obadiah White</div>
<div class="t c" style="left:530.5px;top:73.0px;font-size:5.9px;">Lilias Vaughn</div>
<div class="t c" style="left:592px;top:73.0px;font-size:5.9px;">Skydancer Co</div>
<div class="t c" style="right:6.7999999999999545px;top:73.0px;font-size:5.9px">4.92</div>
<div class="t c" style="left:3px;top:86.30000000000001px;font-size:5.9px;">10</div>
<div class="t c" style="left:64.69999999999999px;top:86.30000000000001px;font-size:5.9px;">Harbor Vista</div>
<div class="t c" style="left:125.69999999999999px;top:86.30000000000001px;font-size:5.9px;">2</div>
<div class="t c" style="left:182.60000000000002px;top:86.30000000000001px;font-size:5.9px;">Teke-Sta-Thoroug</div>
<div class="t c" style="left:239.60000000000002px;top:86.30000000000001px;font-size:5.9px;">Not Graded</div>
<div class="ab" style="left:346px;top:81.80000000000001px;width:55px;height:9.799999999999997px;background:#9fd8ab;"></div>
<div class="t c" style="left:346px;width:55px;text-align:center;top:87.00000000000001px;font-size:5.3px;color:#274f34">100.0%</div>
<div class="t c" style="left:408.3px;top:86.30000000000001px;font-size:5.9px;">Serene</div>
<div class="t c" style="left:469px;top:86.30000000000001px;font-size:5.9px;">Celine Carroll</div>
<div class="t c" style="left:530.5px;top:86.30000000000001px;font-size:5.9px;">Poppy Solis</div>
<div class="t c" style="left:592px;top:86.30000000000001px;font-size:5.9px;">Charlie Anne Equine</div>
<div class="t c" style="right:6.7999999999999545px;top:86.30000000000001px;font-size:5.9px">2.68</div>
<div class="ab" style="left:0px;top:93.10000000000001px;width:714.5px;height:13.299999999999997px;background:#0f0f0f;"></div>
<div class="t c" style="left:3px;top:99.60000000000001px;font-size:5.9px;">1</div>
<div class="t c" style="left:64.69999999999999px;top:99.60000000000001px;font-size:5.9px;">Tiberius Twilight</div>
<div class="t c" style="left:125.69999999999999px;top:99.60000000000001px;font-size:5.9px;">2</div>
<div class="t c" style="left:182.60000000000002px;top:99.60000000000001px;font-size:5.9px;">Teke-Sta-Thoroug</div>
<div class="t c" style="left:239.60000000000002px;top:99.60000000000001px;font-size:5.9px;">Not Graded</div>
<div class="ab" style="left:346px;top:95.10000000000001px;width:55px;height:9.799999999999997px;background:#9fd8ab;"></div>
<div class="t c" style="left:346px;width:55px;text-align:center;top:100.30000000000001px;font-size:5.3px;color:#274f34">100.0%</div>
<div class="t c" style="left:408.3px;top:99.60000000000001px;font-size:5.9px;">Serene</div>
<div class="t c" style="left:469px;top:99.60000000000001px;font-size:5.9px;">Irene Brooks</div>
<div class="t c" style="left:530.5px;top:99.60000000000001px;font-size:5.9px;">Gretchen Gentry</div>
<div class="t c" style="left:592px;top:99.60000000000001px;font-size:5.9px;">Valkyrie Strong-wille</div>
<div class="t c" style="right:6.7999999999999545px;top:99.60000000000001px;font-size:5.9px">0.0</div>
<div class="t c" style="left:3px;top:112.9px;font-size:5.9px;">9</div>
<div class="t c" style="left:64.69999999999999px;top:112.9px;font-size:5.9px;">Galaxy Vincent</div>
<div class="t c" style="left:125.69999999999999px;top:112.9px;font-size:5.9px;">2</div>
<div class="t c" style="left:182.60000000000002px;top:112.9px;font-size:5.9px;">Thoroughbred</div>
<div class="t c" style="left:239.60000000000002px;top:112.9px;font-size:5.9px;">Not Graded</div>
<div class="ab" style="left:346px;top:108.4px;width:55px;height:9.799999999999997px;background:#9fd8ab;"></div>
<div class="t c" style="left:346px;width:55px;text-align:center;top:113.60000000000001px;font-size:5.3px;color:#274f34">100.0%</div>
<div class="t c" style="left:408.3px;top:112.9px;font-size:5.9px;">Lively</div>
<div class="t c" style="left:469px;top:112.9px;font-size:5.9px;">Xavier Gill</div>
<div class="t c" style="left:530.5px;top:112.9px;font-size:5.9px;">Jude Norris</div>
<div class="t c" style="left:592px;top:112.9px;font-size:5.9px;">Charlie Anne Equine</div>
<div class="t c" style="right:6.7999999999999545px;top:112.9px;font-size:5.9px">7.53</div>
<div class="ab" style="left:0px;top:119.7px;width:714.5px;height:13.299999999999997px;background:#0f0f0f;"></div>
<div class="t c" style="left:3px;top:126.2px;font-size:5.9px;">8</div>
<div class="t c" style="left:64.69999999999999px;top:126.2px;font-size:5.9px;">Leggiero Shakespea</div>
<div class="t c" style="left:125.69999999999999px;top:126.2px;font-size:5.9px;">2</div>
<div class="t c" style="left:182.60000000000002px;top:126.2px;font-size:5.9px;">Thoroughbred</div>
<div class="t c" style="left:239.60000000000002px;top:126.2px;font-size:5.9px;">Not Graded</div>
<div class="ab" style="left:346px;top:121.7px;width:55px;height:9.799999999999997px;background:#9fd8ab;"></div>
<div class="t c" style="left:346px;width:55px;text-align:center;top:126.9px;font-size:5.3px;color:#274f34">100.0%</div>
<div class="t c" style="left:408.3px;top:126.2px;font-size:5.9px;">Tranquil</div>
<div class="t c" style="left:469px;top:126.2px;font-size:5.9px;">Fisher Bowman</div>
<div class="t c" style="left:530.5px;top:126.2px;font-size:5.9px;">Xanthippe Ramirez</div>
<div class="t c" style="left:592px;top:126.2px;font-size:5.9px;">Taylor &amp; Stafford Ltd</div>
<div class="t c" style="right:6.7999999999999545px;top:126.2px;font-size:5.9px">7.97</div>
<div class="t c" style="left:3px;top:139.5px;font-size:5.9px;">2</div>
<div class="t c" style="left:64.69999999999999px;top:139.5px;font-size:5.9px;">Cashew Downpour</div>
<div class="t c" style="left:125.69999999999999px;top:139.5px;font-size:5.9px;">2</div>
<div class="t c" style="left:182.60000000000002px;top:139.5px;font-size:5.9px;">Thoroughbred</div>
<div class="t c" style="left:239.60000000000002px;top:139.5px;font-size:5.9px;">Not Graded</div>
<div class="ab" style="left:346px;top:135.0px;width:55px;height:9.800000000000011px;background:#9fd8ab;"></div>
<div class="t c" style="left:346px;width:55px;text-align:center;top:140.2px;font-size:5.3px;color:#274f34">100.0%</div>
<div class="t c" style="left:408.3px;top:139.5px;font-size:5.9px;">Balanced</div>
<div class="t c" style="left:469px;top:139.5px;font-size:5.9px;">Marcus Grant</div>
<div class="t c" style="left:530.5px;top:139.5px;font-size:5.9px;">Xanthea Curry</div>
<div class="t c" style="left:592px;top:139.5px;font-size:5.9px;">Dixon &amp; Mills Meado</div>
<div class="t c" style="right:6.7999999999999545px;top:139.5px;font-size:5.9px">8.72</div>
<div class="ab" style="left:0px;top:146.3px;width:714.5px;height:13.300000000000011px;background:#0f0f0f;"></div>
<div class="t c" style="left:3px;top:152.8px;font-size:5.9px;">7</div>
<div class="t c" style="left:64.69999999999999px;top:152.8px;font-size:5.9px;">Pearl Mosaic</div>
<div class="t c" style="left:125.69999999999999px;top:152.8px;font-size:5.9px;">2</div>
<div class="t c" style="left:182.60000000000002px;top:152.8px;font-size:5.9px;">American Quarter</div>
<div class="t c" style="left:239.60000000000002px;top:152.8px;font-size:5.9px;">Not Graded</div>
<div class="ab" style="left:346px;top:148.3px;width:55px;height:9.800000000000011px;background:#9fd8ab;"></div>
<div class="t c" style="left:346px;width:55px;text-align:center;top:153.5px;font-size:5.3px;color:#274f34">100.0%</div>
<div class="t c" style="left:408.3px;top:152.8px;font-size:5.9px;">Serene</div>
<div class="t c" style="left:469px;top:152.8px;font-size:5.9px;">Tatum Castillo</div>
<div class="t c" style="left:530.5px;top:152.8px;font-size:5.9px;">Silas Richard</div>
<div class="t c" style="left:592px;top:152.8px;font-size:5.9px;">Tidbit Zinc Meadow</div>
<div class="t c" style="right:6.7999999999999545px;top:152.8px;font-size:5.9px">7.93</div>
<div class="t c" style="left:3px;top:166.10000000000002px;font-size:5.9px;">3</div>
<div class="t c" style="left:64.69999999999999px;top:166.10000000000002px;font-size:5.9px;">Silver Lining</div>
<div class="t c" style="left:125.69999999999999px;top:166.10000000000002px;font-size:5.9px;">2</div>
<div class="t c" style="left:182.60000000000002px;top:166.10000000000002px;font-size:5.9px;">Thoroughbred</div>
<div class="t c" style="left:239.60000000000002px;top:166.10000000000002px;font-size:5.9px;">Not Graded</div>
<div class="ab" style="left:346px;top:161.60000000000002px;width:55px;height:9.800000000000011px;background:#9fd8ab;"></div>
<div class="t c" style="left:346px;width:55px;text-align:center;top:166.8px;font-size:5.3px;color:#274f34">100.0%</div>
<div class="t c" style="left:408.3px;top:166.10000000000002px;font-size:5.9px;">Serene</div>
<div class="t c" style="left:469px;top:166.10000000000002px;font-size:5.9px;">Ava Moss</div>
<div class="t c" style="left:530.5px;top:166.10000000000002px;font-size:5.9px;">Noah Reed</div>
<div class="t c" style="left:592px;top:166.10000000000002px;font-size:5.9px;">Skydancer Co</div>
<div class="t c" style="right:6.7999999999999545px;top:166.10000000000002px;font-size:5.9px">6.1</div>
</div>
<div class="ab" style="left:80px;top:493.1px;width:713px;height:0.7999999999999545px;background:#1a1a1a;"></div>
<div class="ab" style="left:788.4px;top:331.8px;width:3.6000000000000227px;height:151.39999999999998px;background:#9a9a9a;border-radius:2px;"></div>
</div></body></html>
